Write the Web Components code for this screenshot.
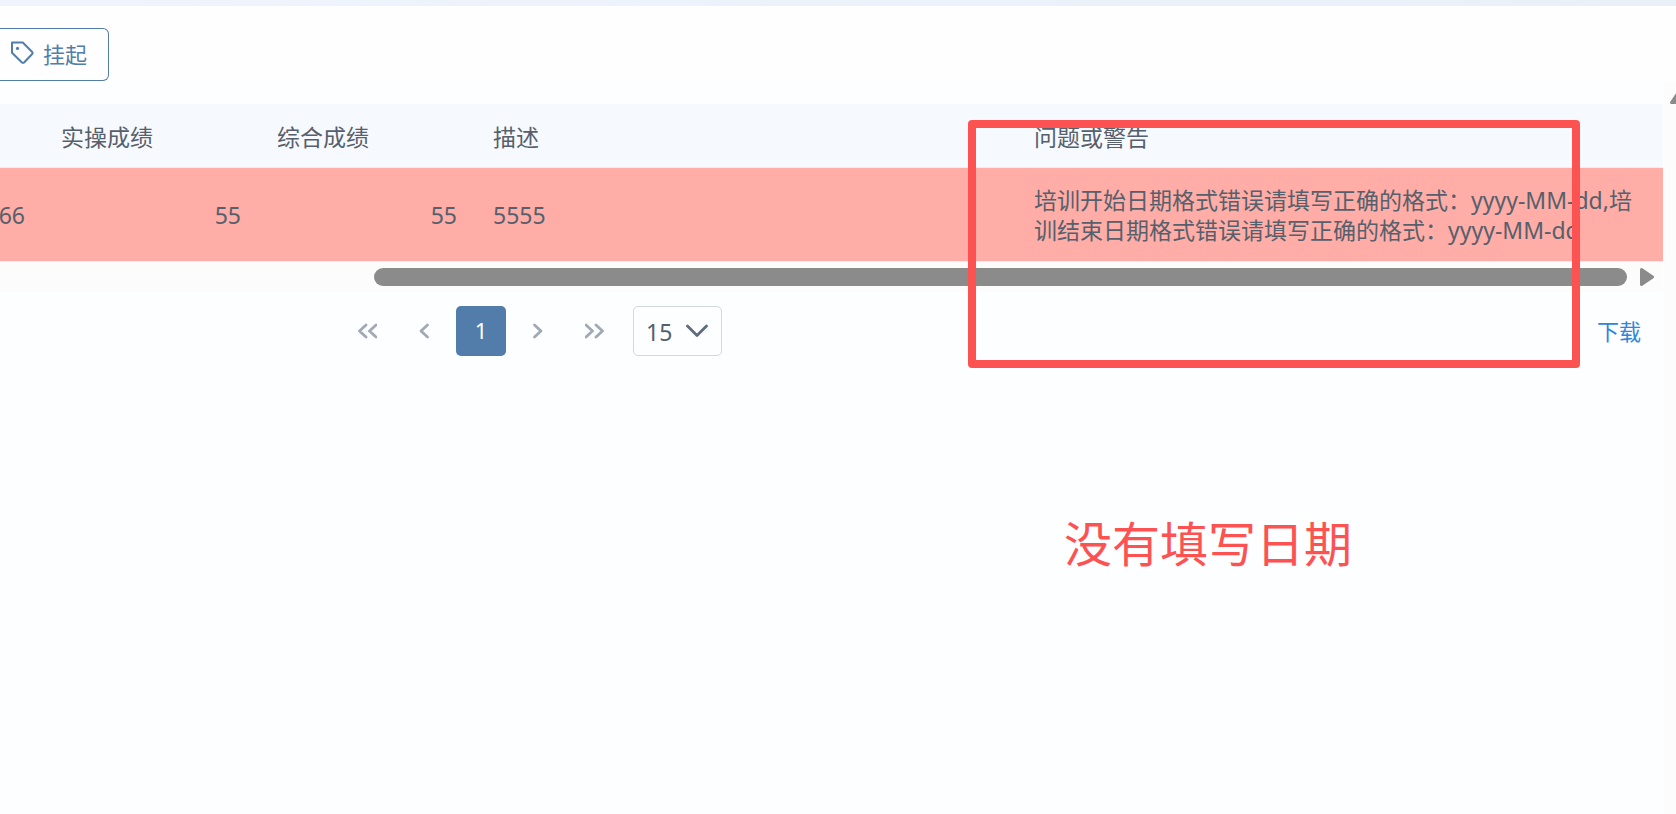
<!DOCTYPE html>
<html lang="zh-CN">
<head>
<meta charset="utf-8">
<title>导入记录</title>
<style>
  html, body { margin: 0; height: 100%; }
  body {
    background: #fdfeff;
    color: #56606c;
    font-family: "Noto Sans", "Noto Sans CJK SC", sans-serif;
    font-size: 22px;
    overflow: hidden;
  }
</style>
</head>
<body>
<import-page></import-page>

<script>
const define = (name, html) => {
  const template = document.createElement("template");
  template.innerHTML = html;
  customElements.define(name, class extends HTMLElement {
    constructor() {
      super();
      this.attachShadow({ mode: "open" }).append(template.content.cloneNode(true));
    }
  });
};

define("tag-button", `
  <style>
    :host { display: block; }
    button {
      display: flex; align-items: center; gap: 9px;
      height: 53px; padding: 0 21px 3px 10px;
      border: 1px solid #527daa; border-left: 0; border-radius: 0 6px 6px 0;
      background: #fefefe; color: #527daa; font: inherit;
    }
    svg { width: 24px; height: 24px; }
  </style>
  <button type="button">
    <svg viewBox="0 0 24 24" fill="none" stroke="currentColor" stroke-width="2" stroke-linejoin="round" aria-hidden="true">
      <path d="M2 1.5H12.8L22.2 11Q23 12 22.2 13L14.3 21.2Q13 22.4 11.7 21.2L2 11.8Z"/>
      <circle cx="7.5" cy="7.4" r="1.6" fill="currentColor" stroke="none"/>
    </svg>
    <slot></slot>
  </button>`);

define("result-table", `
  <style>
    :host { display: block; }
    table { width: 100%; border-collapse: separate; border-spacing: 0; table-layout: fixed; font-size: 23px; line-height: 30px; }
    .edge { width: 43px; }
    .score { width: 216px; }
    .desc { width: 541px; }
    th, td { box-sizing: border-box; padding: 0 18px; text-align: left; font-weight: 400; }
    th { height: 64px; padding-top: 2px; background: #f6f9fe; border-bottom: 1px solid #eaeff6; }
    td { height: 94px; background: #ffada6; border-bottom: 1px solid #eef0f4; }
    .num { text-align: right; }
    .first { padding-left: 0; direction: rtl; }
  </style>
  <table>
    <colgroup><col class="edge"><col class="score"><col class="score"><col class="desc"><col></colgroup>
    <thead>
      <tr><th></th><th>实操成绩</th><th>综合成绩</th><th>描述</th><th>问题或警告</th></tr>
    </thead>
    <tbody>
      <tr>
        <td class="num first">66</td><td class="num">55</td><td class="num">55</td><td>5555</td>
        <td>培训开始日期格式错误请填写正确的格式：yyyy-MM-dd,培<br>训结束日期格式错误请填写正确的格式：yyyy-MM-dd</td>
      </tr>
    </tbody>
  </table>`);

define("scroll-track", `
  <style>
    :host { display: flex; align-items: center; gap: 13px; height: 30px; padding: 0 9px 0 374px; background: #fcfcfc; }
    .thumb { flex: 1; height: 18px; border-radius: 9px; background: #8b8b8b; }
    svg { width: 14px; height: 18px; }
  </style>
  <div class="thumb"></div>
  <svg viewBox="0 0 14 18" aria-hidden="true"><path d="M1.5 1.5L12.5 9L1.5 16.5Z" fill="#8b8b8b" stroke="#8b8b8b" stroke-width="3" stroke-linejoin="round"/></svg>`);

define("scroll-gutter", `
  <style>
    :host { display: block; overflow: hidden; background: #fcfcfc; }
    svg { display: block; width: 18px; height: 14px; margin: 9px 0 0 6px; }
  </style>
  <svg viewBox="0 0 18 14" aria-hidden="true"><path d="M1.5 12.5L9 1.5L16.5 12.5Z" fill="#8b8b8b" stroke="#8b8b8b" stroke-width="3" stroke-linejoin="round"/></svg>`);

define("page-nav", `
  <style>
    :host { display: flex; align-items: center; gap: 7px; }
    button {
      display: grid; place-items: center; width: 50px; height: 50px; padding: 0;
      border: 0; border-radius: 5px; background: none; color: #a0a9b4; font: inherit;
    }
    button svg { width: 20px; height: 16px; }
    .current { padding-bottom: 2px; background: #527daa; color: #fff; }
    .size { display: grid; margin-left: 6px; }
    .size > * { grid-area: 1 / 1; }
    select {
      appearance: none; box-sizing: border-box; width: 89px; height: 50px; padding: 2px 0 0 12px;
      border: 1px solid #d3d8de; border-radius: 5px; background: #fdfeff; color: #56606c; font: inherit; font-size: 23px;
    }
    .size svg { width: 22px; height: 14px; place-self: center end; margin-right: 14px; pointer-events: none; color: #5f6c7b; }
    svg { fill: none; stroke: currentColor; stroke-width: 2.8; stroke-linecap: round; stroke-linejoin: round; }
  </style>
  <button type="button" aria-label="首页"><svg viewBox="0 0 20 16"><path d="M9 2L2.5 8L9 14M19 2L12.5 8L19 14"/></svg></button>
  <button type="button" aria-label="上一页"><svg viewBox="0 0 20 16"><path d="M13.5 2L7 8L13.5 14"/></svg></button>
  <button type="button" class="current" aria-current="page">1</button>
  <button type="button" aria-label="下一页"><svg viewBox="0 0 20 16"><path d="M6.5 2L13 8L6.5 14"/></svg></button>
  <button type="button" aria-label="末页"><svg viewBox="0 0 20 16"><path d="M1 2L7.5 8L1 14M11 2L17.5 8L11 14"/></svg></button>
  <div class="size">
    <select aria-label="每页条数"><option>15</option></select>
    <svg viewBox="0 0 22 14" aria-hidden="true"><path d="M1.5 2L11 11.5L20.5 2"/></svg>
  </div>`);

define("review-note", `
  <style>
    :host { position: absolute; inset: 120px 96px auto 968px; color: #fd5252; pointer-events: none; }
    .frame { height: 232px; border: 8px solid; border-radius: 4px; }
    p { margin: 140px 0 0 96px; font-size: 48px; line-height: 72px; }
  </style>
  <div class="frame"></div>
  <p><slot></slot></p>`);

define("import-page", `
  <style>
    :host { display: flex; flex-direction: column; position: relative; min-height: 100vh; }
    .strip { height: 6px; background: linear-gradient(90deg, #eff4fd, #e9f0f8); }
    header { height: 53px; padding: 22px 0 0; background: #fefefe; }
    .body { flex: 1; display: grid; grid-template-columns: 1fr 12px; gap: 1px; }
    main { padding-top: 23px; }
    footer { display: flex; justify-content: space-between; align-items: center; padding: 14px 22px 0 342px; }
    a { padding-bottom: 2px; color: #2f86dc; text-decoration: none; }
  </style>
  <div class="strip"></div>
  <header><tag-button>挂起</tag-button></header>
  <div class="body">
    <main>
      <result-table></result-table>
      <scroll-track></scroll-track>
      <footer><page-nav></page-nav><a href="#download">下载</a></footer>
    </main>
    <scroll-gutter></scroll-gutter>
  </div>
  <review-note>没有填写日期</review-note>`);
</script>
</body>
</html>
